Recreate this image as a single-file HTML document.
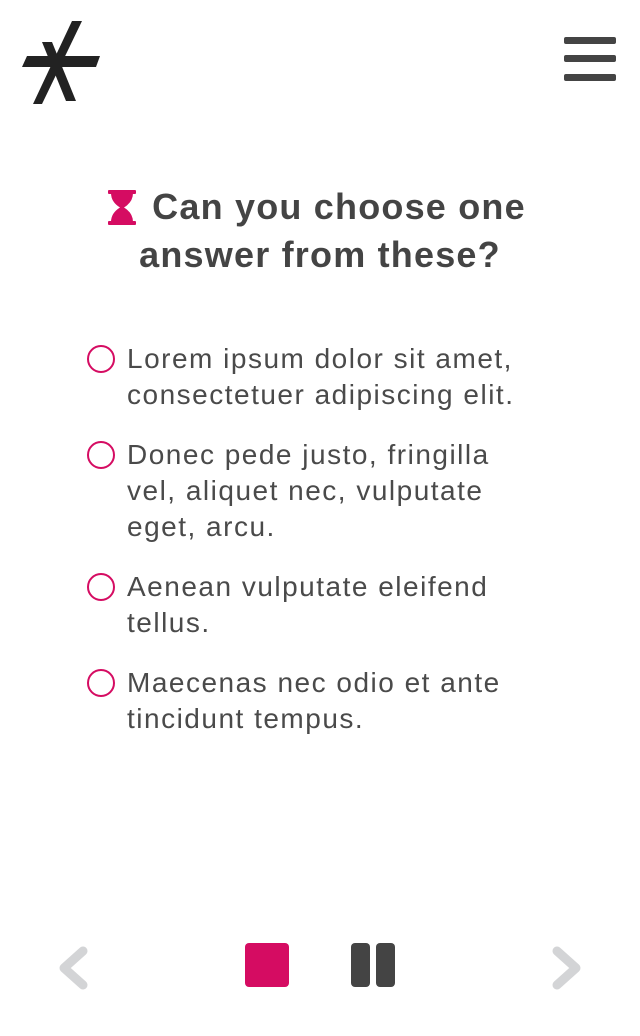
<!DOCTYPE html>
<html><head><meta charset="utf-8"><style>
body{margin:0;width:640px;height:1036px;background:#fff;position:relative;font-family:"Liberation Sans",sans-serif;color:#444;overflow:hidden}
.t{position:absolute;left:0;width:640px;top:183px;text-align:center;font-weight:bold;font-size:36px;line-height:48px;color:#444;letter-spacing:1.2px}
.o{position:absolute;left:127px;width:500px;font-size:28px;line-height:36px;color:#4a4a4a;letter-spacing:1.5px;white-space:nowrap}
.c{position:absolute;left:87px;width:24px;height:24px;border:2.5px solid #d50c62;border-radius:50%}
</style></head><body>
<svg style="position:absolute;left:0;top:0" width="120" height="120">
<polygon points="72,21 82,21 42,104 33,104" fill="#222"/>
<polygon points="42,42 52,42 76,101 66,101" fill="#222"/>
<polygon points="27,56 100,56 96,67 22,67" fill="#222"/>
</svg>
<div style="position:absolute;left:564px;top:37px;width:52px;height:7px;background:#444;border-radius:2px"></div>
<div style="position:absolute;left:564px;top:55px;width:52px;height:7px;background:#444;border-radius:2px"></div>
<div style="position:absolute;left:564px;top:74px;width:52px;height:7px;background:#444;border-radius:2px"></div>
<svg style="position:absolute;left:108px;top:190px" width="28" height="35" viewBox="0 0 28 35"><rect x="0" y="0" width="28" height="4" rx="1" fill="#d50c62"/><path d="M3 3 H25 Q25 12 16 17.5 Q25 23 25 32 H3 Q3 23 12 17.5 Q3 12 3 3Z" fill="#d50c62"/><rect x="0" y="31" width="28" height="4" rx="1" fill="#d50c62"/></svg>
<div class="t"><span style="display:inline-block;width:38px"></span>Can you choose one<br>answer from these?</div>
<div class="c" style="top:345px"></div><div class="o" style="top:341px">Lorem ipsum dolor sit amet,<br>consectetuer adipiscing elit.</div>
<div class="c" style="top:441px"></div><div class="o" style="top:437px">Donec pede justo, fringilla<br>vel, aliquet nec, vulputate<br>eget, arcu.</div>
<div class="c" style="top:573px"></div><div class="o" style="top:569px">Aenean vulputate eleifend<br>tellus.</div>
<div class="c" style="top:669px"></div><div class="o" style="top:665px">Maecenas nec odio et ante<br>tincidunt tempus.</div>
<svg style="position:absolute;left:0;top:930px" width="640" height="80">
<polyline points="83,21 64,38 83,55" fill="none" stroke="#d3d4d6" stroke-width="9" stroke-linecap="round" stroke-linejoin="round"/>
<rect x="245" y="13" width="44" height="44" rx="4" fill="#d50c62"/>
<rect x="351" y="13" width="19" height="44" rx="4" fill="#444"/>
<rect x="376" y="13" width="19" height="44" rx="4" fill="#444"/>
<polyline points="557,21 576,38 557,55" fill="none" stroke="#d3d4d6" stroke-width="9" stroke-linecap="round" stroke-linejoin="round"/>
</svg>
</body></html>
